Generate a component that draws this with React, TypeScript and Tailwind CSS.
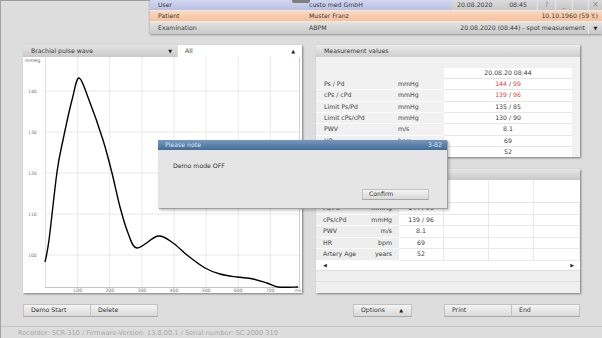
import React from 'react'

type Pt = [number, number]

// pulse wave traced from the reference, in chart pixels
const wave: Pt[] = [
  [22, 205], [26, 183], [34, 115], [40, 83], [49, 43], [56, 21], [66, 43], [80, 83],
  [89, 116], [97, 150], [105, 176], [114, 191], [135, 179], [150, 186], [164, 198],
  [182, 211], [197, 217], [214, 220], [230, 222], [244, 226], [255, 230], [275, 230],
]

function smooth(pts: Pt[]) {
  let d = `M${pts[0][0]},${pts[0][1]}`
  for (let i = 0; i < pts.length - 1; i++) {
    const p0 = pts[i - 1] || pts[i]
    const p1 = pts[i]
    const p2 = pts[i + 1]
    const p3 = pts[i + 2] || p2
    const c1x = p1[0] + (p2[0] - p0[0]) / 6
    const c1y = p1[1] + (p2[1] - p0[1]) / 6
    const c2x = p2[0] - (p3[0] - p1[0]) / 6
    const c2y = p2[1] - (p3[1] - p1[1]) / 6
    d += ` C${c1x.toFixed(1)},${c1y.toFixed(1)} ${c2x.toFixed(1)},${c2y.toFixed(1)} ${p2[0]},${p2[1]}`
  }
  return d
}

const yTicks = [
  { v: '140', y: 34 },
  { v: '130', y: 75 },
  { v: '120', y: 116 },
  { v: '110', y: 157 },
  { v: '100', y: 198 },
]
const xTicks = [1, 2, 3, 4, 5, 6, 7].map((k) => ({ v: String(k * 100), x: 22.6 + 32.1 * k }))

function Chart() {
  return (
    <svg width="279" height="236" className="block bg-white">
      {yTicks.map((t) => (
        <line key={t.v} x1="22" x2="276" y1={t.y} y2={t.y} stroke="#e8e8e8" strokeWidth="1" />
      ))}
      {xTicks.map((t) => (
        <line key={t.v} x1={t.x} x2={t.x} y1="0" y2="230" stroke="#e8e8e8" strokeWidth="1" />
      ))}
      <line x1="22.5" x2="22.5" y1="0" y2="230" stroke="#e0e0e0" />
      <line x1="22" x2="276" y1="230.5" y2="230.5" stroke="#c4c4c4" />
      <line x1="276.5" x2="276.5" y1="0" y2="231" stroke="#d0d0d0" />
      <text x="2" y="5" fontSize="4.6" fill="#666" fontFamily="DejaVu Sans, sans-serif">mmHg</text>
      {yTicks.map((t) => (
        <text key={t.v} x="5" y={t.y + 1.6} fontSize="4.6" fill="#777" fontFamily="DejaVu Sans, sans-serif">
          {t.v}
        </text>
      ))}
      {xTicks.map((t) => (
        <text key={t.v} x={t.x} y="235" fontSize="4.6" fill="#777" textAnchor="middle" fontFamily="DejaVu Sans, sans-serif">
          {t.v}
        </text>
      ))}
      <text x="275" y="235" fontSize="4.6" fill="#777" textAnchor="middle" fontFamily="DejaVu Sans, sans-serif">ms</text>
      <path d={smooth(wave)} fill="none" stroke="#000" strokeWidth="1.4" strokeLinejoin="round" />
    </svg>
  )
}

function Val({ a, b, red }: { a: string; b: string; red?: boolean }) {
  const c = red ? 'text-[#e53a3a]' : ''
  return (
    <span className="whitespace-pre">
      <span className={c}>{a}</span>
      {' / '}
      <span className={c}>{b}</span>
    </span>
  )
}

const measRows = [
  { l: 'Ps / Pd', u: 'mmHg', v: <Val a="144" b="99" red /> },
  { l: 'cPs / cPd', u: 'mmHg', v: <Val a="139" b="96" red /> },
  { l: 'Limit Ps/Pd', u: 'mmHg', v: <Val a="135" b="85" /> },
  { l: 'Limit cPs/cPd', u: 'mmHg', v: <Val a="130" b="90" /> },
  { l: 'PWV', u: 'm/s', v: '8.1' },
  { l: 'HR', u: 'bpm', v: '69' },
  { l: 'Artery Age', u: 'years', v: '52' },
]

const trendRows = [
  { l: 'Ps/Pd', u: 'mmHg', v: '144 / 99' },
  { l: 'cPs/cPd', u: 'mmHg', v: '139 / 96' },
  { l: 'PWV', u: 'm/s', v: '8.1' },
  { l: 'HR', u: 'bpm', v: '69' },
  { l: 'Artery Age', u: 'years', v: '52' },
]

function Btn({ label, w, arrow, className = '' }: { label: string; w: string; arrow?: boolean; className?: string }) {
  return (
    <div
      className={`${w} h-[13px] flex items-center justify-between pl-[7px] pr-[8px] bg-gradient-to-b from-[#f4f4f4] to-[#d9d9d9] border border-[#c2c2c2] border-b-[#a8a8a8] text-[#333] ${className}`}
    >
      <span>{label}</span>
      {arrow && <span className="text-[5px] text-[#222]">▲</span>}
    </div>
  )
}

export default function App() {
  return (
    <div className="relative w-[602px] h-[338px] overflow-hidden bg-[#dddddd] border-l border-[#a3a3a3] font-['DejaVu_Sans',sans-serif] text-[6.2px] text-[#3a3a3a] leading-none flex flex-col">
      {/* patient header */}
      <div className="flex h-[34px] shrink-0">
        <div className="w-[149px] border-t border-[#9c9c9c]" />
        <div className="w-[452px] flex flex-col shadow-[0_1px_2px_rgba(0,0,0,0.35)]">
          <div className="flex h-[11px] border-b border-[#eef0fa]/70">
            <div className="w-[152px] flex items-center pl-[8px] bg-gradient-to-b from-[#d3d8f1] to-[#b9c0e3]">User</div>
            <div className="w-[150px] flex items-center pl-[7px] bg-gradient-to-b from-[#d3d8f1] to-[#b9c0e3]">custo med GmbH</div>
            <div className="w-[85px] flex items-center justify-between pl-[5px] pr-[10px] bg-gradient-to-b from-[#dcdcdc] to-[#c9c9c9]">
              <span>20.08.2020</span>
              <span>08:45</span>
            </div>
            <div className="w-[18px] flex items-center justify-center bg-gradient-to-b from-[#d9d9d9] to-[#c6c6c6] border-l border-[#e6e6e6] text-[#8c8c8c] text-[7px]">?</div>
            <div className="w-[17px] flex items-end justify-center pb-[1px] bg-gradient-to-b from-[#d9d9d9] to-[#c6c6c6] border-l border-[#e6e6e6] text-[#8c8c8c] text-[7px]">_</div>
            <div className="w-[16px] bg-gradient-to-b from-[#d9d9d9] to-[#c6c6c6] border-l border-[#e6e6e6]" />
            <div className="w-[14px] flex items-center justify-center bg-gradient-to-b from-[#d9d9d9] to-[#c6c6c6] border-l border-[#e6e6e6] text-[#8c8c8c] text-[7.5px]">✕</div>
          </div>
          <div className="flex h-[11px] bg-gradient-to-b from-[#fcd8bd] to-[#f5c19d] border-b border-[#fff1e6]/70">
            <div className="w-[152px] flex items-center pl-[8px]">Patient</div>
            <div className="flex-1 flex items-center justify-between pl-[7px] pr-[4px]">
              <span>Muster Franz</span>
              <span>10.10.1960 (59 Y.)</span>
            </div>
          </div>
          <div className="flex h-[12px] bg-gradient-to-b from-[#e3e3e3] to-[#c8c8c8]">
            <div className="w-[152px] flex items-center pl-[8px]">Examination</div>
            <div className="flex-1 flex items-center justify-between pl-[7px] pr-[3px]">
              <span>ABPM</span>
              <span>20.08.2020 (08:44) - spot measurement</span>
            </div>
            <div className="w-[14px] flex items-center justify-center border-l border-[#e6e6e6] text-[5px] text-[#222]">▼</div>
          </div>
        </div>
      </div>
      <div className="absolute left-[291px] top-0 w-[18px] h-[3px] bg-[#7f7f7f] rounded-b-[2px]" />

      {/* panels */}
      <div className="flex mt-[11px] ml-[22px] gap-[14px] h-[248px] shrink-0">
        <div className="w-[279px] flex flex-col bg-white shadow-[1px_1px_2px_rgba(0,0,0,0.45)]">
          <div className="flex h-[12px] bg-[#dddddd] gap-[1px]">
            <div className="w-[154px] flex items-center justify-between pl-[8px] pr-[5px] bg-gradient-to-b from-[#e4e4e4] to-[#c9c9c9]">
              <span>Brachial pulse wave</span>
              <span className="text-[5px] text-[#222]">▼</span>
            </div>
            <div className="flex-1 flex items-center justify-between pl-[7px] pr-[7px] bg-white">
              <span>All</span>
              <span className="text-[5px] text-[#222]">▲</span>
            </div>
          </div>
          <Chart />
        </div>

        <div className="w-[264px] flex flex-col gap-[12px]">
          <div className="h-[112px] flex flex-col bg-[#f1f1f1] overflow-hidden shadow-[1px_1px_2px_rgba(0,0,0,0.45)]">
            <div className="h-[12px] shrink-0 flex items-center pl-[8px] bg-gradient-to-b from-[#ececec] to-[#cdcdcd]">
              Measurement values
            </div>
            <div className="h-[11px] shrink-0" />
            <div className="flex h-[11px] shrink-0">
              <div className="w-[128px]" />
              <div className="w-[128px] flex items-center justify-center bg-white border-b border-[#e4e4e4]">20.08.20 08:44</div>
            </div>
            {measRows.map((r) => (
              <div key={r.l} className="flex h-[11.33px] shrink-0">
                <div className="w-[82px] flex items-center pl-[8px] border-b border-[#fbfbfb]">{r.l}</div>
                <div className="w-[46px] flex items-center border-b border-[#fbfbfb]">{r.u}</div>
                <div className="w-[128px] flex items-center justify-center bg-white border-b border-[#e6e6e6]">{r.v}</div>
              </div>
            ))}
          </div>

          <div className="h-[124px] flex flex-col bg-[#efefef] overflow-hidden shadow-[1px_1px_2px_rgba(0,0,0,0.45)]">
            <div className="h-[11px] shrink-0 bg-gradient-to-b from-[#e8e8e8] to-[#c8c8c8]" />
            <div className="flex h-[23px] shrink-0 bg-white border-b border-[#e6e6e6]">
              <div className="w-[83px]" />
              <div className="w-[45px] border-r border-[#ececec]" />
              <div className="w-[45px] border-r border-[#ececec]" />
              <div className="w-[45px] border-r border-[#ececec]" />
              <div className="w-[45px]" />
            </div>
            {trendRows.map((r) => (
              <div key={r.l} className="flex h-[11.5px] shrink-0">
                <div className="w-[83px] flex items-center justify-between pl-[7px] pr-[7px] bg-[#eeeeee] border-b border-[#fafafa]">
                  <span>{r.l}</span>
                  <span>{r.u}</span>
                </div>
                <div className="w-[45px] flex items-center justify-center bg-white border-r border-b border-[#e8e8e8] whitespace-pre">{r.v}</div>
                <div className="w-[45px] bg-white border-r border-b border-[#e8e8e8]" />
                <div className="w-[45px] bg-white border-r border-b border-[#e8e8e8]" />
                <div className="w-[45px] bg-white border-b border-[#e8e8e8]" />
              </div>
            ))}
            <div className="h-[10px] shrink-0 flex items-center justify-between pl-[7px] pr-[6px] bg-white border-b border-[#dedede] text-[5px] text-[#333]">
              <span>◀</span>
              <span>▶</span>
            </div>
            <div className="h-[11px] shrink-0 border-b border-[#e2e2e2]" />
          </div>
        </div>
      </div>

      {/* buttons */}
      <div className="flex mt-[11px] ml-[22px] shrink-0">
        <Btn label="Demo Start" w="w-[68px]" />
        <Btn label="Delete" w="w-[67px]" className="border-l-0" />
        <Btn label="Options" w="w-[59px]" arrow className="ml-[195px] pl-[5px]" />
        <Btn label="Print" w="w-[68px]" className="ml-[32px]" />
        <Btn label="End" w="w-[68px]" className="border-l-0" />
      </div>

      {/* status */}
      <div className="mt-[9px] h-[13px] shrink-0 flex items-center pl-[17px] border-t border-[#c6c6c6] text-[#a9a9a9] text-[6.6px]">
        Recorder: SCR-310 / Firmware-Version: 13.0.00.1 / Serial number: SC 2000 310
      </div>

      {/* message dialog */}
      <div className="absolute left-[157px] top-[140px] w-[289px] h-[68px] flex flex-col bg-[#e5e5e5] shadow-[1px_1px_0_#a0a0a0,2px_2px_3px_rgba(0,0,0,0.3)]">
        <div className="h-[9.5px] shrink-0 flex items-center justify-between pl-[7px] pr-[5px] bg-gradient-to-b from-[#7699c0] to-[#426c99] text-[#dfe7f0]">
          <span>Please note</span>
          <span>3-82</span>
        </div>
        <div className="pl-[15px] mt-[13px] text-[#333]">Demo mode OFF</div>
        <div className="mt-auto mb-[8px] ml-[204px] w-[67px] h-[11px] flex items-center pl-[6px] bg-gradient-to-b from-[#f4f4f4] to-[#d9d9d9] border border-[#c2c2c2] border-b-[#a8a8a8] text-[#333]">
          Confirm
        </div>
      </div>
    </div>
  )
}
